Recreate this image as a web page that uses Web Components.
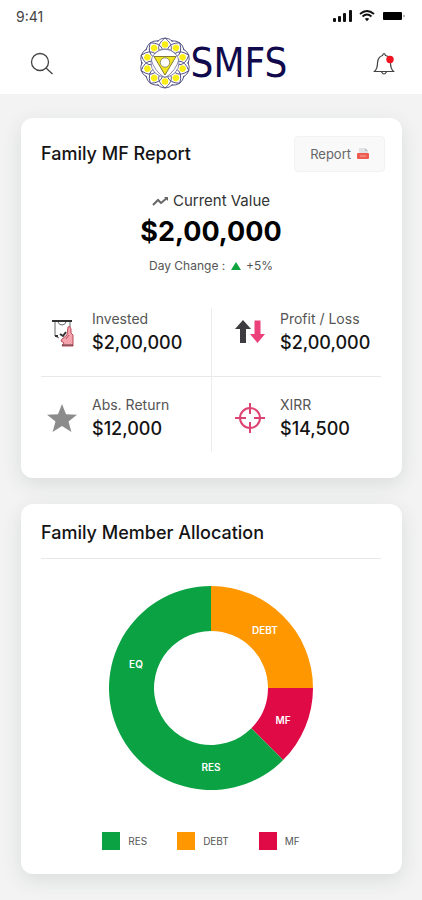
<!DOCTYPE html>
<html lang="en">
<head>
<meta charset="utf-8">
<meta name="viewport" content="width=device-width, initial-scale=1">
<title>SMFS</title>
<style>
    body {
        margin: 0;
        background: #f3f3f3;
        color: #141414;
        font-family: Inter, Roboto, sans-serif;
    }
</style>
</head>
<body>
<smfs-app></smfs-app>

<script>
const define = (name, html) => {
    customElements.define(
        name,
        class extends HTMLElement {
            connectedCallback() {
                if (this.shadowRoot) return;
                this.attachShadow({ mode: 'open' });
                this.shadowRoot.innerHTML = typeof html === 'function' ? html(this) : html;
            }
        }
    );
};

const icons = {
    invest: /* html */ `
        <svg width="30" height="30" viewBox="0 0 30 30" fill="none">
            <path d="M5 4H25" stroke="#333" stroke-width="2"/>
            <path d="M8 5V19L12 21M23 5V10M11 5Q12 8 15 8Q18 8 19 5" stroke="#666"/>
            <path d="M8 19H11M13 17L16 19L19 15" stroke="#333" stroke-width="2"/>
            <path d="M15 22L20 18L21 10Q23 8 24 12V16L26 18V29H15L17 26L14 24Z" fill="#f4a3ac" stroke="#b84b5a"/>
            <path d="M15 28H26" stroke="#5a3036" stroke-width="1"/>
            <path d="M22 18L19 22" stroke="#b84b5a"/>
        </svg>`,
    arrows: /* html */ `
        <svg width="30" height="30" viewBox="0 0 30 30">
            <path d="M8 3L16 12H11V26H5V12H0Z" fill="#3c3c40"/>
            <path d="M22.500 26L30 17H25.500V3.500H19.500V17H15Z" fill="#ec407a"/>
        </svg>`,
    star: /* html */ `
        <svg width="30" height="30" viewBox="0 0 30 30">
            <path d="M15 1L19 11.300L30 11.800L21.500 18.500L24.400 29L15 23L5.600 29L8.500 18.500L0 11.800L11 11.300Z" fill="#8c8c8c"/>
        </svg>`,
    target: /* html */ `
        <svg width="30" height="30" viewBox="0 0 30 30" fill="none" stroke="#dd4372" stroke-width="2">
            <circle cx="15" cy="15" r="10"/>
            <path d="M15 0V11M15 19V30M0 15H11M19 15H30"/>
        </svg>`,
};

define('status-bar', /* html */ `
    <style>
        :host {
            display: flex;
            justify-content: space-between;
            align-items: center;
            height: 32px;
            padding: 0 16px;
            color: #444;
            font-size: 14px;
        }
        div { display: flex; align-items: center; gap: 7px; }
        svg { display: block; }
    </style>
    <span>9:41</span>
    <div>
        <svg width="19" height="12" viewBox="0 0 19 12" fill="#111">
            <rect x="0" y="8" width="3" height="4" rx="1"/>
            <rect x="5" y="6" width="3" height="6" rx="1"/>
            <rect x="10" y="3" width="3" height="9" rx="1"/>
            <rect x="16" y="0" width="3" height="12" rx="1"/>
        </svg>
        <svg width="16" height="12" viewBox="0 0 16 12" fill="none" stroke="#111" stroke-width="1.800">
            <path d="M1 4Q8 -2 15 4M3.500 6.500Q8 2.500 12.500 6.500"/>
            <path d="M5.800 8.800Q8 7 10.200 8.800L8 11.200Z" fill="#111" stroke="none"/>
        </svg>
        <svg width="24" height="10" viewBox="0 0 24 10" fill="#000">
            <rect x="1" y="1" width="19" height="8" rx="1"/>
            <path d="M21.500 3.500Q24 5 21.500 6.500Z" fill="#777"/>
        </svg>
    </div>
`);

define('brand-logo', () => {
    const spin = (count, markup) =>
        Array.from({ length: count }, (_, i) => `<g transform="rotate(${(i * 360) / count} 26 26)">${markup}</g>`).join('');

    return /* html */ `
        <style>
            :host {
                display: flex;
                align-items: center;
                color: #100a4c;
                font: 40px/52px "DejaVu Sans Condensed", "Arial Narrow", sans-serif;
            }
            svg { display: block; }
        </style>
        <svg width="52" height="52" viewBox="0 0 52 52" fill="none" stroke="#514f82" stroke-width="0.900">
            ${spin(10, '<path d="M18 4.500Q26 -2.500 34 4.500"/><path d="M26 1Q18 7 20 13.500M26 1Q34 7 32 13.500"/>')}
            <circle cx="26" cy="26" r="14" stroke="#7d7ba3"/>
            <path d="M12 22Q15 34 26 41Q37 34 40 22M15 17Q26 7 37 17" stroke="#7d7ba3"/>
            ${spin(10, '<circle cx="26" cy="7.500" r="3.300" fill="#fbee16" stroke="none"/>')}
            <path d="M15 19.500H37L26 38Z" fill="#f3e51c" stroke="#77712c"/>
            <circle cx="26" cy="25.500" r="4.700" fill="#fff" stroke="#8a8658"/>
        </svg>
        <span>SMFS</span>
    `;
});

define('app-header', /* html */ `
    <style>
        :host {
            display: flex;
            justify-content: space-between;
            align-items: center;
            height: 62px;
            padding: 0 20px 0 24px;
            box-sizing: border-box;
        }
        button {
            display: grid;
            place-items: center;
            width: 36px;
            height: 40px;
            padding: 0;
            border: 0;
            background: none;
        }
        svg { display: block; }
    </style>
    <button type="button" aria-label="Search">
        <svg width="24" height="24" viewBox="0 0 24 24" fill="none" stroke="#444" stroke-width="1.300">
            <circle cx="10" cy="11" r="8.500"/>
            <path d="M16 17L22.500 23"/>
        </svg>
    </button>
    <brand-logo></brand-logo>
    <button type="button" aria-label="Notifications">
        <svg width="22" height="24" viewBox="0 0 22 24" fill="none" stroke="#444" stroke-width="1.200">
            <path d="M1.500 20.500C4 18 4.500 16 4.500 12C4.500 8 7 5 9.500 4.500Q11 0.500 12.500 4.500C15.500 5 17.500 8 17.500 12C17.500 16 18 18 20.500 20.500Z"/>
            <path d="M8.500 21Q11 25 13.500 21"/>
            <circle cx="17" cy="8.500" r="3.700" fill="#f3121d" stroke="none"/>
        </svg>
    </button>
`);

define('info-card', /* html */ `
    <style>
        :host {
            display: block;
            padding: 18px 21px 26px 20px;
            border-radius: 12px;
            background: #fff;
            box-shadow: 0 6px 20px rgba(40, 60, 60, 0.12);
        }
        header {
            display: flex;
            justify-content: space-between;
            align-items: center;
            min-height: 36px;
        }
        h2 { margin: 0; font-size: 18px; line-height: 22px; font-weight: 500; }
        :host([divided]) { padding-top: 11px; padding-bottom: 24px; }
        :host([divided]) header { padding-bottom: 7px; border-bottom: 1px solid #e8e8e8; }
    </style>
    <header>
        <h2><slot name="title"></slot></h2>
        <slot name="action"></slot>
    </header>
    <slot></slot>
`);

define('report-button', /* html */ `
    <style>
        :host { display: block; margin-right: -4px; }
        button {
            display: flex;
            align-items: center;
            gap: 6px;
            height: 36px;
            padding: 0 15px;
            border: 1px solid #f2f2f2;
            border-radius: 4px;
            background: #f9f9f9;
            color: #666;
            font: 13px/16px Inter, Roboto, sans-serif;
        }
    </style>
    <button type="button">
        Report
        <svg width="12" height="12" viewBox="0 0 12 12">
            <path d="M2 0H8L11 3V7H2Z" fill="#dfe3e3"/>
            <path d="M8 0V3H11Z" fill="#b9c0c0"/>
            <rect x="0" y="5" width="12" height="6" rx="1" fill="#ee5a4f"/>
            <path d="M3 8H9" stroke="#f8aaa2"/>
        </svg>
    </button>
`);

define('current-value', /* html */ `
    <style>
        :host { display: block; padding-top: 18px; text-align: center; }
        p { margin: 0; }
        .label { display: flex; justify-content: center; align-items: center; gap: 4px; font-size: 15px; line-height: 22px; color: #333; }
        .value { font-size: 27px; line-height: 40px; font-weight: 700; color: #000; }
        .change { font-size: 12px; line-height: 28px; color: #555; }
        .change svg { margin: 0 2px; }
    </style>
    <p class="label">
        <svg width="17" height="10" viewBox="0 0 17 10" fill="none" stroke="#666" stroke-width="2">
            <path d="M1 9L6 4L9 7L15 2"/>
            <path d="M12 1H16V5Z" fill="#666" stroke="none"/>
        </svg>
        <span>Current Value</span>
    </p>
    <p class="value">$2,00,000</p>
    <p class="change">Day Change : <svg width="10" height="8" viewBox="0 0 10 8"><path d="M5 0L10 8H0Z" fill="#0ca23d"/></svg> +5%</p>
`);

define('stat-item', el => /* html */ `
    <style>
        :host { display: flex; align-items: center; gap: 9px; }
        .icon { display: grid; place-items: center; flex: none; width: 42px; }
        .label { font-size: 14px; line-height: 22px; color: #555; }
        .value { font-size: 18px; line-height: 26px; font-weight: 500; }
    </style>
    <div class="icon">${icons[el.getAttribute('icon')]}</div>
    <div>
        <div class="label">${el.getAttribute('label')}</div>
        <div class="value"><slot></slot></div>
    </div>
`);

define('stat-grid', /* html */ `
    <style>
        :host {
            display: grid;
            grid-template-columns: 1fr 1fr;
            margin-top: 28px;
            background:
                linear-gradient(#ececec, #ececec) center / 1px 100% no-repeat,
                linear-gradient(#e8e8e8, #e8e8e8) 0 68px / 100% 1px no-repeat;
        }
        ::slotted(*) { height: 48px; padding-bottom: 20px; }
        ::slotted(:nth-child(n + 3)) { padding: 18px 0 10px; }
        ::slotted(:nth-child(even)) { padding-left: 18px; }
    </style>
    <slot></slot>
`);

define('donut-chart', () => {
    const green = '#0ba244';
    const slices = [
        { from: 0, to: 90, color: '#ff9700' },
        { from: 90, to: 135, color: '#df0a46' },
        { from: 135, to: 360, color: green },
    ];
    const labels = [
        { label: 'DEBT', at: 43 },
        { label: 'MF', at: 114 },
        { label: 'RES', at: 180 },
        { label: 'EQ', at: 288 },
    ];
    const outer = 102;
    const inner = 57;
    const point = (deg, r) => {
        const a = (deg * Math.PI) / 180;
        return [102 + r * Math.sin(a), 102 - r * Math.cos(a)];
    };
    const ring = ({ from, to, color }) => {
        const large = to - from > 180 ? 1 : 0;
        return `<path fill="${color}" d="M${point(from, outer)}A${outer} ${outer} 0 ${large} 1 ${point(to, outer)}L${point(to, inner)}A${inner} ${inner} 0 ${large} 0 ${point(from, inner)}Z"/>`;
    };
    const text = ({ label, at }) => {
        const [x, y] = point(at, 79).map(Math.round);
        return `<text x="${x}" y="${y + 4}">${label}</text>`;
    };

    return /* html */ `
        <style>
            :host { display: flex; justify-content: center; padding: 27px 0 42px; }
            text { font-size: 10px; font-weight: 600; fill: #fff; text-anchor: middle; }
        </style>
        <svg width="204" height="204" viewBox="0 0 204 204" role="img" aria-label="Allocation">
            ${slices.map(ring).join('')}
            ${labels.map(text).join('')}
        </svg>
    `;
});

define('chart-legend', /* html */ `
    <style>
        :host { display: block; padding-right: 20px; }
        ul { display: flex; justify-content: center; gap: 30px; margin: 0; padding: 0; list-style: none; }
        li { display: flex; align-items: center; gap: 8px; font-size: 10px; line-height: 18px; color: #555; }
        li::before { content: ''; width: 18px; height: 18px; background: var(--swatch); }
    </style>
    <ul>
        <li style="--swatch: #0ba244">RES</li>
        <li style="--swatch: #ff9700">DEBT</li>
        <li style="--swatch: #df0a46">MF</li>
    </ul>
`);

define('smfs-app', /* html */ `
    <style>
        :host { display: block; }
        .top { background: #fff; }
        main { display: grid; gap: 26px; padding: 24px 20px 26px 21px; }
    </style>
    <div class="top">
        <status-bar></status-bar>
        <app-header></app-header>
    </div>
    <main>
        <info-card>
            <span slot="title">Family MF Report</span>
            <report-button slot="action"></report-button>
            <current-value></current-value>
            <stat-grid>
                <stat-item icon="invest" label="Invested">$2,00,000</stat-item>
                <stat-item icon="arrows" label="Profit / Loss">$2,00,000</stat-item>
                <stat-item icon="star" label="Abs. Return">$12,000</stat-item>
                <stat-item icon="target" label="XIRR">$14,500</stat-item>
            </stat-grid>
        </info-card>
        <info-card divided>
            <span slot="title">Family Member Allocation</span>
            <donut-chart></donut-chart>
            <chart-legend></chart-legend>
        </info-card>
    </main>
`);
</script>
</body>
</html>
